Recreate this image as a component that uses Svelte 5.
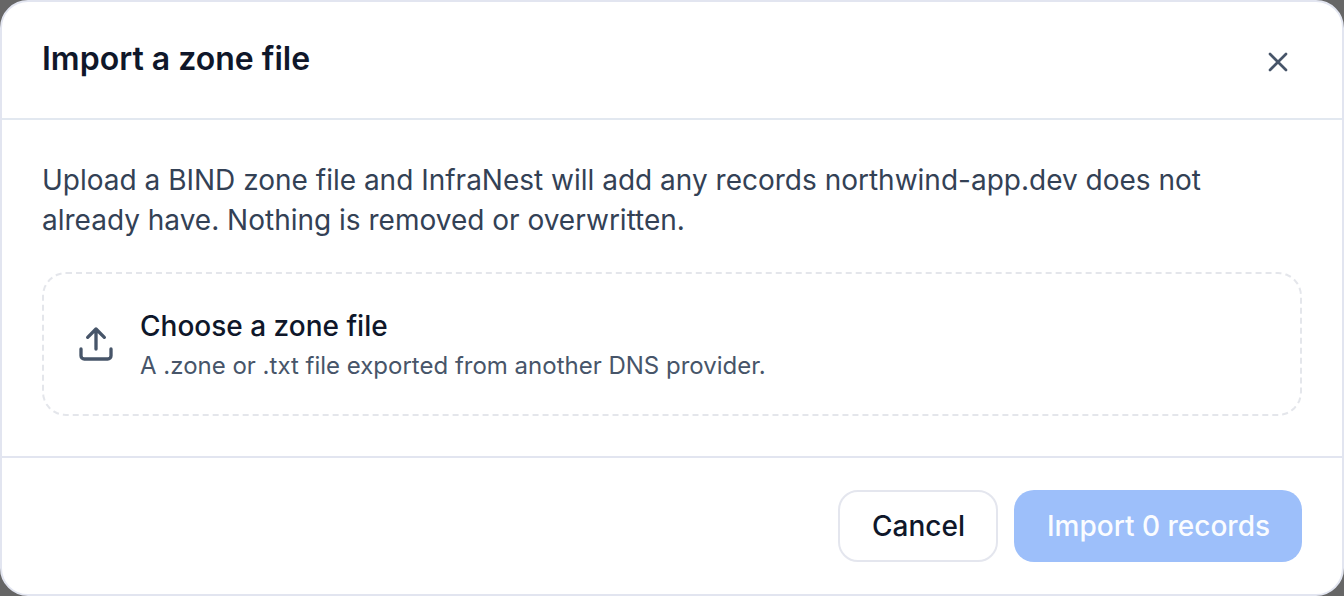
<script>
  let fileName = $state('Choose a zone file');
  let count = $state(0);
</script>

<main>
  <div class="dialog" role="dialog" aria-labelledby="title">
    <header>
      <h1 id="title">Import a zone file</h1>
      <button class="close" aria-label="Close">
        <svg width="32" height="32" viewBox="0 0 24 24" fill="none" stroke="currentColor" stroke-width="2" stroke-linecap="round" stroke-linejoin="round"><path d="M18 6 6 18M6 6l12 12" /></svg>
      </button>
    </header>
    <section>
      <p class="intro">Upload a BIND zone file and InfraNest will add any records northwind-app.dev does not already have. Nothing is removed or overwritten.</p>
      <div class="drop">
        <svg class="up" width="40" height="40" viewBox="0 0 24 24" fill="none" stroke="currentColor" stroke-width="2" stroke-linecap="round" stroke-linejoin="round"><path d="M12 3v12M17 8l-5-5-5 5M21 15v4a2 2 0 0 1-2 2H5a2 2 0 0 1-2-2v-4" /></svg>
        <div>
          <div class="name">{fileName}</div>
          <div class="hint">A .zone or .txt file exported from another DNS provider.</div>
        </div>
      </div>
    </section>
    <footer>
      <button class="btn cancel">Cancel</button>
      <button class="btn primary" disabled>Import {count} records</button>
    </footer>
  </div>
</main>

<style>
  :global(body) { background: #666; font-family: Inter, sans-serif; }
  main { height: 596px; overflow: hidden; }
  .dialog { box-sizing: border-box; height: 596px; background: #fff; border: 2px solid #e2e5f0; border-radius: 28px; display: flex; flex-direction: column; overflow: hidden; }
  header { box-sizing: border-box; height: 118px; border-bottom: 2px solid #e2e8f0; padding: 0 40px; display: flex; justify-content: space-between; align-items: center; }
  h1 { margin: 0 0 2px; font-size: 32px; line-height: 40px; font-weight: 600; color: #0f172a; }
  button { font-family: inherit; }
  .close { border: 0; padding: 0; background: none; width: 48px; height: 48px; display: grid; place-items: center; color: #475569; margin-top: 4px; }
  section { flex: 1; padding: 40px 40px 0; }
  .intro { margin: 0; font-size: 28px; line-height: 40px; color: #334155; }
  .drop { box-sizing: border-box; margin-top: 32px; height: 144px; padding: 0 32px; display: flex; align-items: center; gap: 24px; border: 2px dashed #e4e6eb; border-radius: 24px; }
  .up { color: #475569; }
  .name { font-size: 28px; line-height: 40px; font-weight: 500; color: #0f172a; }
  .hint { margin-top: 4px; font-size: 24px; line-height: 32px; color: #475569; }
  footer { box-sizing: border-box; height: 138px; border-top: 2px solid #e2e5f0; padding: 32px 40px; display: flex; justify-content: flex-end; gap: 16px; }
  .btn { box-sizing: border-box; height: 72px; border-radius: 20px; font-size: 28px; font-weight: 500; padding: 0 0 0 1px; }
  .cancel { width: 160px; border: 2px solid #e4e6ee; background: #fff; color: #0f172a; }
  .primary { width: 288px; border: 0; background: #9dbffa; color: #fafcff; }
</style>
